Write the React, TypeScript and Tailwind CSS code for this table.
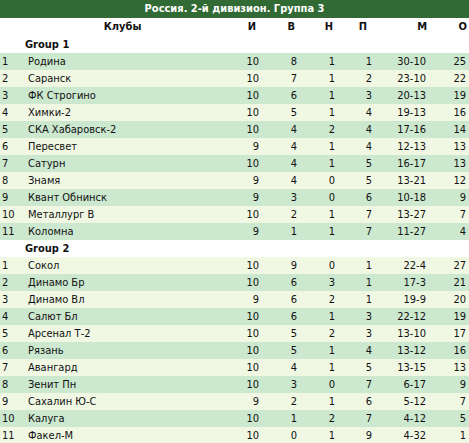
const group1: (string | number)[][] = [
  [1, "Родина", 10, 8, 1, 1, "30-10", 25],
  [2, "Саранск", 10, 7, 1, 2, "23-10", 22],
  [3, "ФК Строгино", 10, 6, 1, 3, "20-13", 19],
  [4, "Химки-2", 10, 5, 1, 4, "19-13", 16],
  [5, "СКА Хабаровск-2", 10, 4, 2, 4, "17-16", 14],
  [6, "Пересвет", 9, 4, 1, 4, "12-13", 13],
  [7, "Сатурн", 10, 4, 1, 5, "16-17", 13],
  [8, "Знамя", 9, 4, 0, 5, "13-21", 12],
  [9, "Квант Обнинск", 9, 3, 0, 6, "10-18", 9],
  [10, "Металлург В", 10, 2, 1, 7, "13-27", 7],
  [11, "Коломна", 9, 1, 1, 7, "11-27", 4],
];

const group2: (string | number)[][] = [
  [1, "Сокол", 10, 9, 0, 1, "22-4", 27],
  [2, "Динамо Бр", 10, 6, 3, 1, "17-3", 21],
  [3, "Динамо Вл", 9, 6, 2, 1, "19-9", 20],
  [4, "Салют Бл", 10, 6, 1, 3, "22-12", 19],
  [5, "Арсенал Т-2", 10, 5, 2, 3, "13-10", 17],
  [6, "Рязань", 10, 5, 1, 4, "13-12", 16],
  [7, "Авангард", 10, 4, 1, 5, "13-15", 13],
  [8, "Зенит Пн", 10, 3, 0, 7, "6-17", 9],
  [9, "Сахалин Ю-С", 9, 2, 1, 6, "5-12", 7],
  [10, "Калуга", 10, 1, 2, 7, "4-12", 5],
  [11, "Факел-М", 10, 0, 1, 9, "4-32", 1],
];

const cols = "grid grid-cols-[25px_215px_22px_38px_38px_37px_54px_40px]";

function Row({ r, dark }: { r: (string | number)[]; dark: boolean }) {
  return (
    <div className={`${cols} h-[17px] leading-[17px] ${dark ? "bg-[#cce8cf]" : "bg-[#f0f8e4]"}`}>
      <div className="pl-[2px]">{r[0]}</div>
      <div className="pl-[3px]">{r[1]}</div>
      {r.slice(2).map((v, i) => (
        <div key={i} className="text-right pr-[3px]">
          {v}
        </div>
      ))}
    </div>
  );
}

function GroupHeader({ name }: { name: string }) {
  return (
    <div className="h-[17px] leading-[17px] bg-white pl-[25px] font-bold">{name}</div>
  );
}

export default function App() {
  return (
    <div className="w-[469px] h-[443px] overflow-hidden bg-white text-[#111] text-[11px] font-['DejaVu_Sans_Condensed','DejaVu_Sans',sans-serif]">
      <div className="h-[18px] leading-[18px] bg-[#316a34] text-white font-bold text-center">
        Россия. 2-й дивизион. Группа 3
      </div>
      <div className={`${cols} h-[18px] leading-[18px] font-bold`}>
        <div className="col-span-2 text-center pl-[5px]">Клубы</div>
        <div className="text-right pr-[6px]">И</div>
        <div className="text-right pr-[5px]">В</div>
        <div className="text-right pr-[5px]">Н</div>
        <div className="text-right pr-[8px]">П</div>
        <div className="text-right pr-[2px]">М</div>
        <div className="text-right pr-[2px]">О</div>
      </div>
      <GroupHeader name="Group 1" />
      {group1.map((r, i) => (
        <Row key={i} r={r} dark={i % 2 === 0} />
      ))}
      <GroupHeader name="Group 2" />
      {group2.map((r, i) => (
        <Row key={i} r={r} dark={i % 2 === 1} />
      ))}
    </div>
  );
}
